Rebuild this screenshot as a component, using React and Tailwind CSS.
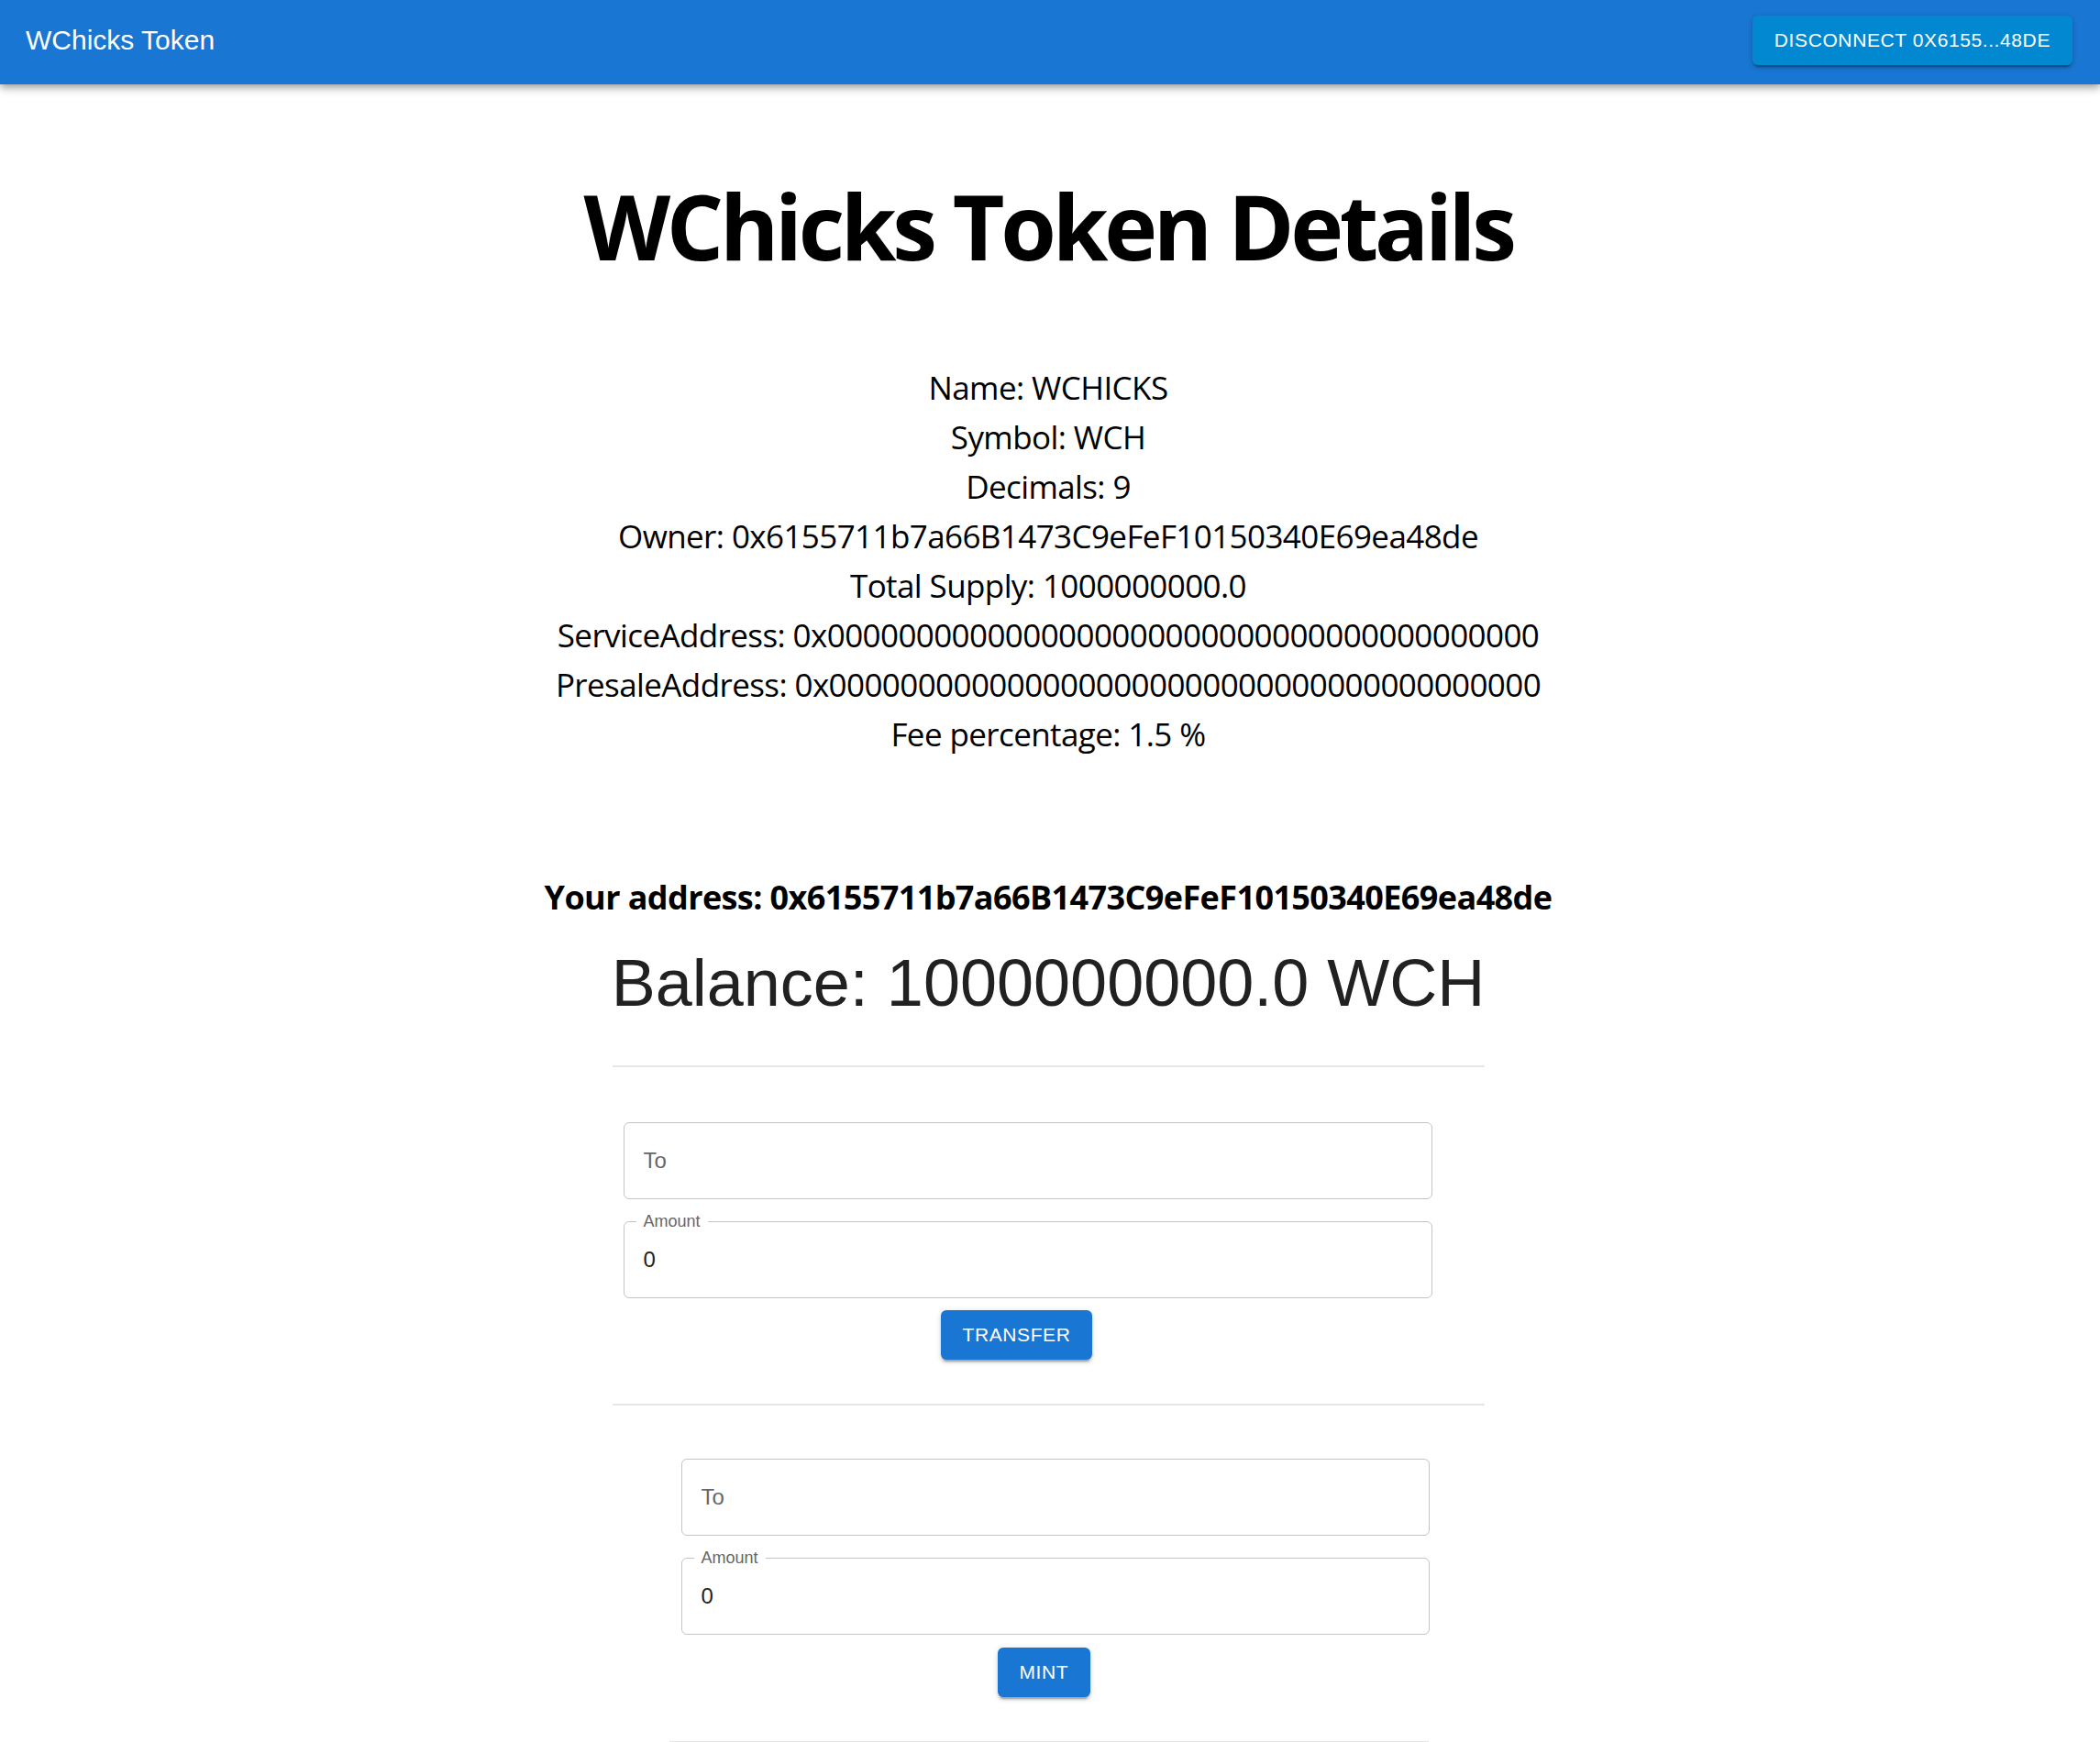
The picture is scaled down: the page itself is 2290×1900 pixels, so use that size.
import React from "react";

const btnShadow =
  "shadow-[0_4.5px_1.5px_-3px_rgba(0,0,0,0.2),0_3px_3px_0_rgba(0,0,0,0.14),0_1.5px_7.5px_0_rgba(0,0,0,0.12)]";

function Field({ label, value }) {
  if (value === undefined) {
    return (
      <div className="h-[84px] w-full rounded-[6px] border border-[#c4c4c4] flex items-center pl-[21px]">
        <span className="text-[24px] leading-none text-[#666666]">{label}</span>
      </div>
    );
  }
  return (
    <div className="relative h-[84px] w-full rounded-[6px] border border-[#c4c4c4] flex items-center pl-[21px]">
      <span className="absolute left-[13px] top-[-10px] bg-white px-[8px] text-[18px] leading-[18px] text-[#666666]">
        {label}
      </span>
      <span className="text-[24px] leading-none text-[#212121]">{value}</span>
    </div>
  );
}

function ActionButton({ children }) {
  return (
    <button
      className={`h-[54px] px-[24px] rounded-[6px] bg-[#1976d2] text-white text-[21px] tracking-[0.6px] uppercase ${btnShadow}`}
    >
      {children}
    </button>
  );
}

export default function App() {
  const details = [
    "Name: WCHICKS",
    "Symbol: WCH",
    "Decimals: 9",
    "Owner: 0x6155711b7a66B1473C9eFeF10150340E69ea48de",
    "Total Supply: 1000000000.0",
    "ServiceAddress: 0x0000000000000000000000000000000000000000",
    "PresaleAddress: 0x0000000000000000000000000000000000000000",
    "Fee percentage: 1.5 %",
  ];
  return (
    <div className="min-h-screen bg-white font-['Liberation_Sans',Arial,sans-serif]">
      <header className="relative z-10 h-[92px] bg-[#1976d2] flex items-center justify-between pl-[28px] pr-[30px] pb-[4px] shadow-[0_3px_6px_-1.5px_rgba(0,0,0,0.2),0_6px_7.5px_0_rgba(0,0,0,0.14),0_1.5px_15px_0_rgba(0,0,0,0.12)]">
        <span className="text-[30px] leading-none text-white">WChicks Token</span>
        <button
          className={`h-[54px] px-[24px] rounded-[6px] bg-[#0288d1] text-white text-[21px] tracking-[0.6px] ${btnShadow}`}
        >
          DISCONNECT 0X6155...48DE
        </button>
      </header>

      <main className="flex flex-col items-center pr-[4px]">
        <h1 className="mt-[104px] text-[98px] leading-[100px] tracking-[-4.3px] font-bold text-black font-['Open_Sans',sans-serif]">
          WChicks Token Details
        </h1>

        <div className="mt-[100px] flex flex-col items-center font-['Open_Sans',sans-serif] text-[35px] leading-[54px] tracking-[-0.6px] text-black">
          {details.map((d) => (
            <div key={d}>{d}</div>
          ))}
        </div>

        <div className="mt-[124px] font-['Open_Sans',sans-serif] font-bold text-[36px] leading-[54px] tracking-[-0.6px] text-black">
          Your address: 0x6155711b7a66B1473C9eFeF10150340E69ea48de
        </div>

        <div className="mt-[24px] text-[72px] leading-[84px] text-[#212121]">
          Balance: 1000000000.0 WCH
        </div>

        <div className="w-[951px] flex flex-col">
          <div className="mt-[48px] h-[2px] w-full bg-[#e6e6e6]" />

          <div className="mt-[60px] ml-[12px] w-[882px] flex flex-col">
            <Field label="To" />
            <div className="mt-[24px]">
              <Field label="Amount" value="0" />
            </div>
          </div>
          <div className="mt-[13px] ml-[358px]">
            <ActionButton>Transfer</ActionButton>
          </div>

          <div className="mt-[48px] h-[2px] w-full bg-[#e6e6e6]" />

          <div className="mt-[58px] ml-[75px] w-[816px] flex flex-col">
            <Field label="To" />
            <div className="mt-[24px]">
              <Field label="Amount" value="0" />
            </div>
          </div>
          <div className="mt-[14px] ml-[420px]">
            <ActionButton>Mint</ActionButton>
          </div>

          <div className="mt-[48px] ml-[62px] h-[2px] w-[828px] bg-[#e6e6e6]" />
        </div>
      </main>
    </div>
  );
}
